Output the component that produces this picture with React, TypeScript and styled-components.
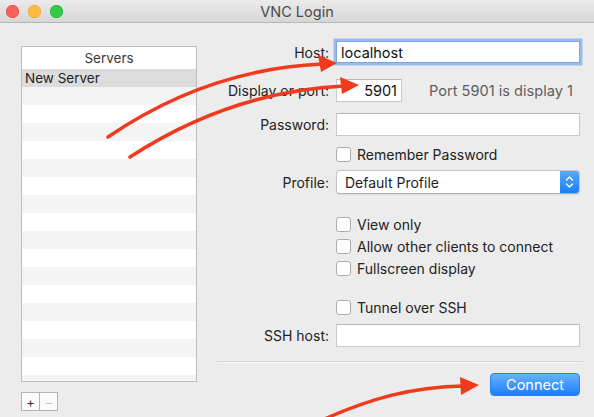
import React from "react";
import styled, { createGlobalStyle } from "styled-components";

const Global = createGlobalStyle`
  html, body { margin: 0; padding: 0; background: #ececec; }
  body { font-family: Inter, "Liberation Sans", sans-serif; -webkit-font-smoothing: antialiased; }
`;

const Window = styled.div`
  position: relative;
  width: 594px;
  height: 417px;
  background: #ececec;
  overflow: hidden;
  display: flex;
  flex-direction: column;
`;

const TitleBar = styled.div`
  height: 22px;
  flex: none;
  display: grid;
  grid-template-columns: 1fr auto 1fr;
  align-items: center;
  background: linear-gradient(#ebebeb, #d6d6d6);
  border-bottom: 1px solid #b8b8b8;
`;

const Lights = styled.div`
  display: flex;
  gap: 9px;
  padding-left: 6px;
`;

const Light = styled.span<{ $c: string; $b: string }>`
  width: 13px;
  height: 13px;
  border-radius: 50%;
  background: ${(p) => p.$c};
  box-shadow: inset 0 0 0 0.5px ${(p) => p.$b};
`;

const Title = styled.div`
  font-size: 14.5px;
  color: #4a4a4a;
`;

const Content = styled.div`
  flex: 1;
  display: flex;
`;

const Sidebar = styled.div`
  padding: 23px 0 0 21px;
  width: 176px;
  display: flex;
  flex-direction: column;
  gap: 10px;
`;

const ListBox = styled.div`
  height: 336px;
  box-sizing: border-box;
  border: 1px solid #bdbdbd;
  background: #fff;
  overflow: hidden;
`;

const ListHeader = styled.div`
  height: 22px;
  display: flex;
  align-items: center;
  justify-content: center;
  font-size: 13.5px;
  color: #3a3a3a;
  background: #fff;
`;

const ListRow = styled.div<{ $tone: "sel" | "odd" | "even" }>`
  height: 18px;
  display: flex;
  align-items: center;
  padding-left: 3px;
  font-size: 13.5px;
  color: #1e1e1e;
  background: ${(p) => (p.$tone === "sel" ? "#dcdcdc" : p.$tone === "odd" ? "#f4f4f4" : "#fff")};
`;

const SmallButtons = styled.div`
  display: flex;
`;

const SmallButton = styled.div<{ $off?: boolean }>`
  width: 19px;
  height: 19px;
  box-sizing: border-box;
  border: 1px solid #b3b3b3;
  margin-left: -1px;
  &:first-child { margin-left: 0; }
  background: #fbfbfb;
  display: flex;
  align-items: center;
  justify-content: center;
  font-size: 13px;
  color: ${(p) => (p.$off ? "#c4c4c4" : "#333")};
`;

const Form = styled.div`
  margin-left: 20px;
  width: 366px;
  padding-top: 18px;
  display: flex;
  flex-direction: column;
`;

const Row = styled.div<{ $mt: number; $h: number }>`
  display: grid;
  grid-template-columns: 112px 244px;
  column-gap: 7px;
  align-items: center;
  margin-top: ${(p) => p.$mt}px;
  height: ${(p) => p.$h}px;
`;

const Label = styled.label`
  text-align: right;
  font-size: 14px;
  color: #222;
  white-space: nowrap;
`;

const Field = styled.div<{ $focus?: boolean; $w?: number; $align?: string }>`
  box-sizing: border-box;
  height: 100%;
  width: ${(p) => (p.$w ? `${p.$w}px` : "100%")};
  background: #fff;
  border: 1px solid ${(p) => (p.$focus ? "#79a8e8" : "#c9c9c9")};
  border-top-color: ${(p) => (p.$focus ? "#79a8e8" : "#b9b9b9")};
  box-shadow: ${(p) => (p.$focus ? "0 0 0 2.5px rgba(112,163,234,0.65)" : "none")};
  display: flex;
  align-items: center;
  justify-content: ${(p) => p.$align || "flex-start"};
  padding: 0 4px;
  font-size: 14.5px;
  color: #111;
`;

const PortWrap = styled.div`
  display: flex;
  align-items: center;
  height: 100%;
  gap: 27px;
`;

const Hint = styled.span`
  font-size: 14.6px;
  color: #5e5e5e;
  white-space: nowrap;
`;

const CheckLine = styled.div`
  grid-column: 2;
  display: flex;
  align-items: center;
  gap: 6px;
  height: 100%;
`;

const Box = styled.span`
  width: 15px;
  height: 15px;
  box-sizing: border-box;
  border: 1px solid #adadad;
  border-radius: 3px;
  background: #fff;
  flex: none;
`;

const CheckText = styled.span`
  font-size: 14px;
  line-height: 15px;
  color: #222;
  white-space: nowrap;
  margin-top: -1px;
`;

const Popup = styled.div`
  box-sizing: border-box;
  height: 100%;
  display: flex;
  align-items: stretch;
  border: 1px solid #c4c4c4;
  border-bottom-color: #b2b2b2;
  border-radius: 4px;
  background: #fff;
  overflow: hidden;
  box-shadow: 0 0.5px 1px rgba(0, 0, 0, 0.08);
`;

const PopupText = styled.span`
  flex: 1;
  display: flex;
  align-items: center;
  padding-left: 8px;
  font-size: 14px;
  color: #1e1e1e;
`;

const Stepper = styled.span`
  width: 19px;
  display: flex;
  align-items: center;
  justify-content: center;
  background: linear-gradient(#5aa8fa, #1a7ff7);
`;

const Separator = styled.div`
  margin-top: 14px;
  height: 1px;
  background: #d2d2d2;
  border-bottom: 1px solid #f6f6f6;
`;

const Footer = styled.div`
  margin-top: 10px;
  display: flex;
  justify-content: flex-end;
  padding-right: 3px;
`;

const ConnectButton = styled.button`
  width: 90px;
  height: 23px;
  box-sizing: border-box;
  border: 1px solid #2b82ea;
  border-radius: 4px;
  background: linear-gradient(#67b1fb, #1d80f8);
  color: #fff;
  font-family: inherit;
  font-size: 14.5px;
  padding: 0;
`;

const Overlay = styled.svg`
  position: absolute;
  left: 0;
  top: 0;
  width: 594px;
  height: 417px;
  pointer-events: none;
`;

const RED = "#f13a1d";

const Check = ({ children }: { children: React.ReactNode }) => (
  <CheckLine>
    <Box />
    <CheckText>{children}</CheckText>
  </CheckLine>
);

export default function App() {
  const rows: ("sel" | "odd" | "even")[] = ["sel"];
  for (let i = 1; i < 18; i++) rows.push(i % 2 === 1 ? "odd" : "even");
  return (
    <Window>
      <Global />
      <TitleBar>
        <Lights>
          <Light $c="#fc605c" $b="#e0443e" />
          <Light $c="#fdbc40" $b="#dea123" />
          <Light $c="#34c84a" $b="#1aab29" />
        </Lights>
        <Title>VNC Login</Title>
        <div />
      </TitleBar>
      <Content>
        <Sidebar>
          <ListBox>
            <ListHeader>Servers</ListHeader>
            {rows.map((t, i) => (
              <ListRow key={i} $tone={t}>
                {i === 0 ? "New Server" : ""}
              </ListRow>
            ))}
          </ListBox>
          <SmallButtons>
            <SmallButton>+</SmallButton>
            <SmallButton $off>−</SmallButton>
          </SmallButtons>
        </Sidebar>
        <Form>
          <Row $mt={0} $h={22}>
            <Label>Host:</Label>
            <Field $focus>localhost</Field>
          </Row>
          <Row $mt={16} $h={23}>
            <Label>Display or port:</Label>
            <PortWrap>
              <Field $w={66} $align="flex-end">5901</Field>
              <Hint>Port 5901 is display 1</Hint>
            </PortWrap>
          </Row>
          <Row $mt={11} $h={23}>
            <Label>Password:</Label>
            <Field />
          </Row>
          <Row $mt={11} $h={15}>
            <Check>Remember Password</Check>
          </Row>
          <Row $mt={8} $h={24}>
            <Label>Profile:</Label>
            <Popup>
              <PopupText>Default Profile</PopupText>
              <Stepper>
                <svg width="9" height="14" viewBox="0 0 9 14">
                  <path d="M1.5 5 L4.5 2 L7.5 5 M1.5 9 L4.5 12 L7.5 9" fill="none" stroke="#fff" strokeWidth="1.4" strokeLinecap="round" strokeLinejoin="round" />
                </svg>
              </Stepper>
            </Popup>
          </Row>
          <Row $mt={23} $h={15}>
            <Check>View only</Check>
          </Row>
          <Row $mt={7} $h={15}>
            <Check>Allow other clients to connect</Check>
          </Row>
          <Row $mt={7} $h={15}>
            <Check>Fullscreen display</Check>
          </Row>
          <Row $mt={24} $h={15}>
            <Check>Tunnel over SSH</Check>
          </Row>
          <Row $mt={9} $h={23}>
            <Label>SSH host:</Label>
            <Field />
          </Row>
          <Separator />
          <Footer>
            <ConnectButton>Connect</ConnectButton>
          </Footer>
        </Form>
      </Content>
      <Overlay viewBox="0 0 594 417">
        <g fill="none" stroke={RED} strokeWidth="3.5" strokeLinecap="round">
          <path d="M108 137 C 165 98, 235 68, 322 64" />
          <path d="M130 157 C 190 118, 262 90, 344 86" />
          <path d="M318 422 C 370 398, 412 387, 464 386" />
        </g>
        <g fill={RED}>
          <polygon points="337,63 318,55 321,72" />
          <polygon points="359,85 340,77 342,94" />
          <polygon points="479,385 460,377 461,395" />
        </g>
      </Overlay>
    </Window>
  );
}
